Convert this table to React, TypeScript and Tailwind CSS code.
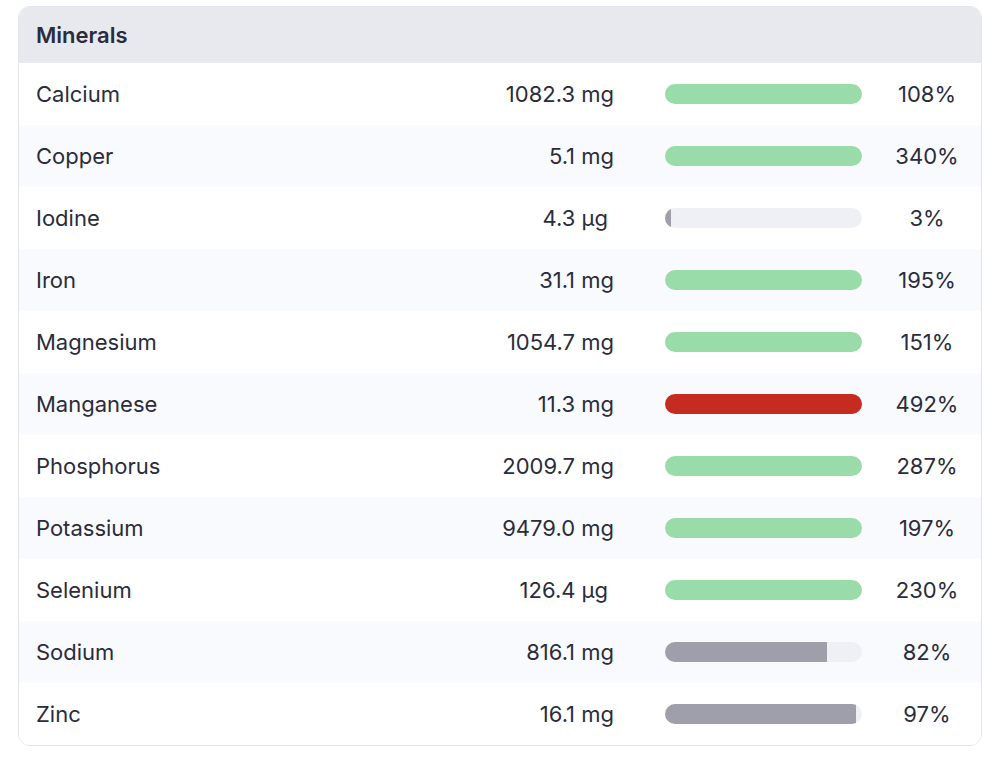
import React from 'react'

type Mineral = {
    name: string
    amount: string
    pct: number
    tone: 'ok' | 'high' | 'low'
}

const minerals: Mineral[] = [
    { name: 'Calcium', amount: '1082.3 mg', pct: 108, tone: 'ok' },
    { name: 'Copper', amount: '5.1 mg', pct: 340, tone: 'ok' },
    { name: 'Iodine', amount: '4.3 µg', pct: 3, tone: 'low' },
    { name: 'Iron', amount: '31.1 mg', pct: 195, tone: 'ok' },
    { name: 'Magnesium', amount: '1054.7 mg', pct: 151, tone: 'ok' },
    { name: 'Manganese', amount: '11.3 mg', pct: 492, tone: 'high' },
    { name: 'Phosphorus', amount: '2009.7 mg', pct: 287, tone: 'ok' },
    { name: 'Potassium', amount: '9479.0 mg', pct: 197, tone: 'ok' },
    { name: 'Selenium', amount: '126.4 µg', pct: 230, tone: 'ok' },
    { name: 'Sodium', amount: '816.1 mg', pct: 82, tone: 'low' },
    { name: 'Zinc', amount: '16.1 mg', pct: 97, tone: 'low' },
]

const fillClass = {
    ok: 'bg-[#9adca9]',
    high: 'bg-[#c52b1f]',
    low: 'bg-[#9e9fab]',
}

const MineralRow = ({ item, index }: { item: Mineral; index: number }) => {
    const width = Math.min(item.pct, 100)
    const micro = item.amount.endsWith('µg')
    return (
        <div className={`flex items-center h-[62px] pl-[17px] pr-[21px] ${index % 2 === 1 ? 'bg-[#f9fafd]' : 'bg-white'}`}>
            <div className="flex-1">{item.name}</div>
            <div className={`w-[200px] text-right ${micro ? 'pr-[6px]' : ''}`}>{item.amount}</div>
            <div className="ml-[51px] w-[197px] h-[20px] rounded-full bg-[#eff0f5] overflow-hidden">
                <div className={`h-full ${fillClass[item.tone]}`} style={{ width: `${width}%` }} />
            </div>
            <div className="ml-[32px] w-[66px] text-center">{item.pct}%</div>
        </div>
    )
}

export default function App() {
    return (
        <div className="min-h-screen bg-white pt-[6px] px-[18px] font-['Inter',sans-serif] text-[22px] text-[#2b2c3b]">
            <div className="border border-[#e4e5ec] rounded-[12px] overflow-hidden">
                <div className="h-[56px] flex items-center pl-[17px] bg-[#e8e9ef] font-semibold">Minerals</div>
                {minerals.map((m, i) => (
                    <MineralRow key={m.name} item={m} index={i} />
                ))}
            </div>
        </div>
    )
}
